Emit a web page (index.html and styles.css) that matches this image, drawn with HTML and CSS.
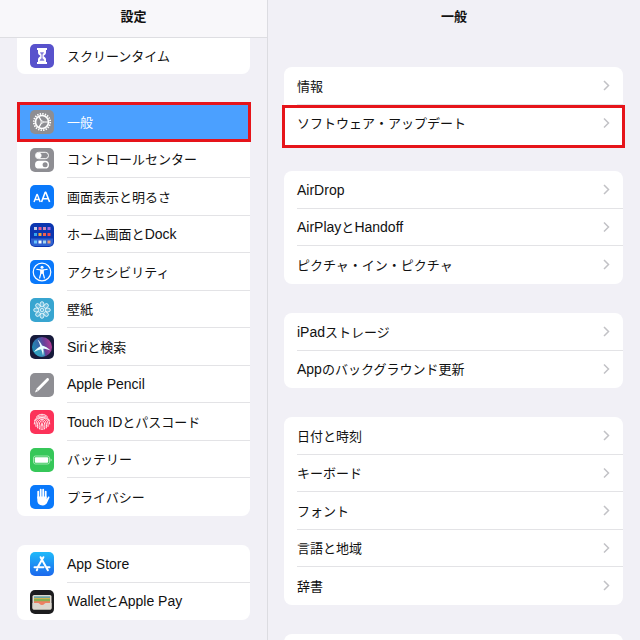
FILE: index.html
```html
<!DOCTYPE html>
<html lang="ja">
<head>
<meta charset="utf-8">
<meta name="viewport" content="width=device-width, initial-scale=1">
<title>設定</title>
<link rel="stylesheet" href="styles.css">
</head>
<body>
<div class="app">
  <nav class="sidebar" aria-labelledby="sidebar-title">
    <header class="bar bar-side"><h1 class="title" id="sidebar-title">設定</h1></header>
    <div class="groups">
      <ul class="card card-cut">
        <li class="row"><a class="link" href="#">
          <svg class="icon" viewBox="0 0 24 24"><rect width="24" height="24" rx="5" fill="#5852cc"/><path d="M7 4h10v2h-1v2.500C16 10.500 14.500 11 13.500 12c1 1 2.500 1.500 2.500 3.500V18h1v2H7v-2h1v-2.500c0-2 1.500-2.500 2.500-3.500C9.500 11 8 10.500 8 8.500V6H7z" fill="#fff"/><path d="M10 8.300h4c-.2 1.300-1.300 1.700-1.500 2.500v3.400c.8.500 1.700 1.100 1.900 2.600H9.600c.2-1.500 1.100-2.100 1.900-2.600v-3.400c-.2-.8-1.300-1.200-1.500-2.500z" fill="#5852cc" opacity=".75"/></svg>
          <span class="label">スクリーンタイム</span></a></li>
      </ul>
      <ul class="card">
        <li class="row row-selected"><a class="link" href="#" aria-current="page">
          <svg class="icon" viewBox="0 0 24 24"><rect width="24" height="24" rx="5" fill="#8e8e93"/><g fill="none" stroke="#fff"><circle cx="12" cy="12" r="8.200" stroke-width="1.800" stroke-dasharray="1.400 1.176"/><circle cx="12" cy="12" r="6.500" stroke-width="1.600"/><path d="M12 12h6M12 12l-3.100-5.400M12 12l-3.100 5.400" stroke-width="1.200"/></g><circle cx="12" cy="12" r="1.500" fill="#fff"/><circle cx="12" cy="12" r=".7" fill="#8e8e93"/></svg>
          <span class="label">一般</span></a><span class="mark mark-side"></span></li>
        <li class="row"><a class="link" href="#">
          <svg class="icon" viewBox="0 0 24 24"><rect width="24" height="24" rx="5" fill="#8e8e93"/><rect x="5.500" y="4.300" width="13" height="6.400" rx="3.200" fill="none" stroke="#fff"/><circle cx="8.700" cy="7.500" r="2.800" fill="#fff"/><rect x="5" y="12.800" width="14" height="7.800" rx="3.900" fill="#fff"/><circle cx="15.100" cy="16.700" r="2.500" fill="#8e8e93"/></svg>
          <span class="label">コントロールセンター</span></a></li>
        <li class="row"><a class="link" href="#">
          <svg class="icon" viewBox="0 0 24 24"><rect width="24" height="24" rx="5" fill="#0a79fb"/><g fill="none" stroke="#fff" stroke-width="1.400" stroke-linejoin="round"><path d="M4 17l2.900-7.500h.4L10.200 17M5 14.500h4.200"/><path d="M11.500 17l3.700-9.700h.6L19.600 17M12.800 13.800h5.500" stroke-width="1.600"/></g></svg>
          <span class="label">画面表示と明るさ</span></a></li>
        <li class="row"><a class="link" href="#">
          <svg class="icon" viewBox="0 0 24 24"><rect width="24" height="24" rx="5" fill="#0b36b0"/><path d="M1 15.500h22V19a4 4 0 0 1-4 4H5a4 4 0 0 1-4-4z" fill="#2f62d0"/><path d="M4 4h3v3H4z" fill="#c7cdea"/><path d="M8.500 4h3v3h-3z" fill="#e85c92"/><path d="M13 4h3v3h-3z" fill="#d08ab0"/><path d="M17.500 4h3v3h-3z" fill="#a568de"/><path d="M4 10h3v3H4z" fill="#35a5ef"/><path d="M8.500 10h3v3h-3z" fill="#f2a43c"/><path d="M13 10h3v3h-3z" fill="#f0604e"/><path d="M17.500 10h3v3h-3z" fill="#ed4b55"/><path d="M4 17.500h3v3H4z" fill="#66c4ff"/><path d="M8.500 17.500h3v3h-3z" fill="#fff"/><path d="M13 17.500h3v3h-3z" fill="#a9d6ed"/><path d="M17.500 17.500h3v3h-3z" fill="#ee9c79"/></svg>
          <span class="label">ホーム画面と<span class="latin">Dock</span></span></a></li>
        <li class="row"><a class="link" href="#">
          <svg class="icon" viewBox="0 0 24 24"><rect width="24" height="24" rx="5" fill="#0a79fb"/><circle cx="12" cy="12" r="8.800" fill="none" stroke="#fff" stroke-width="1.200"/><circle cx="12" cy="7.200" r="1.500" fill="#fff"/><path d="M6.900 9.300c1.700.3 3.200.7 5.100.7s3.400-.4 5.100-.7M10.900 10v3.200L9.600 18M13.100 10v3.200l1.300 4.800" fill="none" stroke="#fff" stroke-width="1.200" stroke-linecap="round"/><path d="M10.400 9.800h3.200v4h-3.200z" fill="#fff"/></svg>
          <span class="label">アクセシビリティ</span></a></li>
        <li class="row"><a class="link" href="#">
          <svg class="icon" viewBox="0 0 24 24"><rect width="24" height="24" rx="5" fill="#38a5d0"/><g fill="#fff" fill-opacity=".25" stroke="#e8f7fc" stroke-width=".9"><circle cx="12" cy="12" r="1.800"/><g id="petals"><ellipse cx="12" cy="6.300" rx="2" ry="2.600"/><ellipse cx="12" cy="17.700" rx="2" ry="2.600"/><ellipse cx="6.300" cy="12" rx="2.600" ry="2"/><ellipse cx="17.700" cy="12" rx="2.600" ry="2"/></g><use href="#petals" transform="rotate(45 12 12)"/></g></svg>
          <span class="label">壁紙</span></a></li>
        <li class="row"><a class="link" href="#">
          <svg class="icon" viewBox="0 0 24 24"><defs><linearGradient id="siri" x1="0" y1=".6" x2="1" y2=".4"><stop offset="0" stop-color="#1c8fb4"/><stop offset=".4" stop-color="#3b62a8"/><stop offset=".65" stop-color="#6a3f98"/><stop offset="1" stop-color="#b83a94"/></linearGradient></defs><rect width="24" height="24" rx="5" fill="#171a3b"/><circle cx="12" cy="12" r="10" fill="url(#siri)"/><path d="M4 16c3-1.500 5-3 8-4 2 3 3 5 3 9-5 2-9 0-11-5z" fill="#36b7c9" opacity=".6"/><path d="M7.500 4.500c2 1.500 3.500 3.500 4.500 6 3 .7 6 2.500 8.500 5-3-1.300-5.200-1.800-7.200-1.800.4 2.300.3 4.600-.3 6.800-.4-2.200-1-4.300-1.900-6.200-2.100.4-4.400 1.200-7.100 2.900 1.700-2.600 3.700-4.500 6.300-5.900-.6-2.500-1.500-4.700-2.800-6.800z" fill="#e9ffff"/></svg>
          <span class="label"><span class="latin">Siri</span>と検索</span></a></li>
        <li class="row"><a class="link" href="#">
          <svg class="icon" viewBox="0 0 24 24"><rect width="24" height="24" rx="5" fill="#8e8e93"/><path d="M5 19.500l1.400-3.700L16.600 5.400c1.300-1.300 3.300.7 2 2L8.300 17.900z" fill="#fff"/><path d="M6.200 15.800l2 2" stroke="#8e8e93" stroke-width=".6"/></svg>
          <span class="label"><span class="latin">Apple Pencil</span></span></a></li>
        <li class="row"><a class="link" href="#">
          <svg class="icon" viewBox="0 0 24 24"><rect width="24" height="24" rx="5" fill="#fc3259"/><g fill="none" stroke="#fff" stroke-width=".9" stroke-linecap="round"><path d="M6.500 6.800C9.500 3.400 14.500 3.400 17.500 6.800M4.600 10.500C7 4.300 17 4.300 19.400 10.500M4.300 14c-.2-9 15.600-9 15.400 0M6 16.500c-2-11.500 14-11.500 12 0M7.700 18c-2.500-11.500 11-11.500 8.600 0M9.500 19c-2.500-11 7.500-11 5 0M11.200 19.600c-1.400-8 3-8 1.600 0M12 12.800v3"/></g></svg>
          <span class="label"><span class="latin">Touch ID</span>とパスコード</span></a></li>
        <li class="row"><a class="link" href="#">
          <svg class="icon" viewBox="0 0 24 24"><rect width="24" height="24" rx="5" fill="#36c759"/><rect x="3.500" y="8" width="16" height="8" rx="2" fill="none" stroke="#b6edc2" stroke-width=".8"/><rect x="4.800" y="9.200" width="13.400" height="5.600" rx="1" fill="#fff"/><path d="M20.600 10.500c1.300.5 1.300 2.500 0 3z" fill="#d9f7df"/></svg>
          <span class="label">バッテリー</span></a></li>
        <li class="row"><a class="link" href="#">
          <svg class="icon" viewBox="0 0 24 24"><rect width="24" height="24" rx="5" fill="#0a79fb"/><g stroke="#fff" stroke-linecap="round" stroke-width="1.800" fill="none"><path d="M8.200 13V6.600M10.700 12V4.600M13.200 12V4.600M15.700 13V6.600"/></g><path d="M7.300 11.500h9.300v2.700l1.300-2.200c.6-.9 1.900-.3 1.500.7l-2.200 4.800c-.8 1.800-2.200 2.900-4.500 2.900-3.600 0-5.400-2-5.400-5.300z" fill="#fff"/></svg>
          <span class="label">プライバシー</span></a></li>
      </ul>
      <ul class="card">
        <li class="row"><a class="link" href="#">
          <svg class="icon" viewBox="0 0 24 24"><defs><linearGradient id="store" x2="0" y2="1"><stop stop-color="#1fbafa"/><stop offset="1" stop-color="#1c68ed"/></linearGradient></defs><rect width="24" height="24" rx="5" fill="url(#store)"/><path d="M10.600 5.200l6.700 12M13.400 5.200L8.100 14.500M4.500 15.300h9M16.500 15.300h3M7.300 17.300l-.5.900M17.300 17.200l.6 1" fill="none" stroke="#fff" stroke-width="2" stroke-linecap="round"/></svg>
          <span class="label"><span class="latin">App Store</span></span></a></li>
        <li class="row"><a class="link" href="#">
          <svg class="icon" viewBox="0 0 24 24"><rect width="24" height="24" rx="5" fill="#1c1c1e"/><rect x="2.500" y="5" width="19" height="14.500" rx="1.500" fill="#ddd8cf"/><path d="M4 6.300h16v3H4z" fill="#6aa5a5"/><path d="M4 8.300h16v4H4z" fill="#86b053"/><path d="M4 8h16v1H4z" fill="#d2b24d"/><path d="M4 11.300h16v2.500l-4 .5c-1 1.200-2 2.200-4 2.200s-3-1-4-2.200l-4-.5z" fill="#ed7f62"/><path d="M2.500 13H8c1.500 0 1.800 2 4 2s2.500-2 4-2h5.500v5a1.500 1.500 0 0 1-1.500 1.500H4A1.500 1.500 0 0 1 2.500 18z" fill="#dcd7ce"/></svg>
          <span class="label"><span class="latin">Wallet</span>と<span class="latin">Apple Pay</span></span></a></li>
      </ul>
    </div>
  </nav>
  <main class="detail">
    <header class="bar"><h2 class="title">一般</h2></header>
    <div class="groups">
      <ul class="card">
        <li class="row"><a class="link" href="#"><span class="label">情報</span><svg class="chevron" viewBox="0 0 7 11"><path d="M1 1l4.500 4.500L1 10"/></svg></a></li>
        <li class="row"><a class="link" href="#"><span class="label">ソフトウェア・アップデート</span><svg class="chevron" viewBox="0 0 7 11"><path d="M1 1l4.500 4.500L1 10"/></svg></a><span class="mark mark-detail"></span></li>
      </ul>
      <ul class="card">
        <li class="row"><a class="link" href="#"><span class="label"><span class="latin">AirDrop</span></span><svg class="chevron" viewBox="0 0 7 11"><path d="M1 1l4.500 4.500L1 10"/></svg></a></li>
        <li class="row"><a class="link" href="#"><span class="label"><span class="latin">AirPlay</span>と<span class="latin">Handoff</span></span><svg class="chevron" viewBox="0 0 7 11"><path d="M1 1l4.500 4.500L1 10"/></svg></a></li>
        <li class="row"><a class="link" href="#"><span class="label">ピクチャ・イン・ピクチャ</span><svg class="chevron" viewBox="0 0 7 11"><path d="M1 1l4.500 4.500L1 10"/></svg></a></li>
      </ul>
      <ul class="card">
        <li class="row"><a class="link" href="#"><span class="label"><span class="latin">iPad</span>ストレージ</span><svg class="chevron" viewBox="0 0 7 11"><path d="M1 1l4.500 4.500L1 10"/></svg></a></li>
        <li class="row"><a class="link" href="#"><span class="label"><span class="latin">App</span>のバックグラウンド更新</span><svg class="chevron" viewBox="0 0 7 11"><path d="M1 1l4.500 4.500L1 10"/></svg></a></li>
      </ul>
      <ul class="card">
        <li class="row"><a class="link" href="#"><span class="label">日付と時刻</span><svg class="chevron" viewBox="0 0 7 11"><path d="M1 1l4.500 4.500L1 10"/></svg></a></li>
        <li class="row"><a class="link" href="#"><span class="label">キーボード</span><svg class="chevron" viewBox="0 0 7 11"><path d="M1 1l4.500 4.500L1 10"/></svg></a></li>
        <li class="row"><a class="link" href="#"><span class="label">フォント</span><svg class="chevron" viewBox="0 0 7 11"><path d="M1 1l4.500 4.500L1 10"/></svg></a></li>
        <li class="row"><a class="link" href="#"><span class="label">言語と地域</span><svg class="chevron" viewBox="0 0 7 11"><path d="M1 1l4.500 4.500L1 10"/></svg></a></li>
        <li class="row"><a class="link" href="#"><span class="label">辞書</span><svg class="chevron" viewBox="0 0 7 11"><path d="M1 1l4.500 4.500L1 10"/></svg></a></li>
      </ul>
      <ul class="card"><li class="row"></li></ul>
    </div>
  </main>
</div>
</body>
</html>
```
FILE: styles.css
```css
* { box-sizing: border-box; }

body {
  margin: 0;
  background: #f1f0f6;
  color: #111;
  font: 13px/20px "Noto Sans CJK JP", sans-serif;
}

.app {
  display: grid;
  grid-template-columns: 268px 1fr;
  height: 100vh;
  overflow: hidden;
}

.sidebar { border-right: 1px solid #dcdce1; }

.bar {
  display: flex;
  justify-content: center;
  padding: 6px 0 11px;
}

.bar-side {
  background: #f8f7fa;
  border-bottom: 1px solid #dedee2;
}

.title {
  margin: 0;
  font-size: 13px;
  line-height: 20px;
  font-weight: 700;
}

.groups {
  display: flex;
  flex-direction: column;
  gap: 29px;
  padding: 0 17px;
}

.detail .groups { padding: 30px 17px 0 16px; }

.card {
  margin: 0;
  padding: 0;
  list-style: none;
  background: #fff;
  border-radius: 8px;
}

.row {
  position: relative;
  isolation: isolate;
  display: flex;
  min-height: 38px;
}

.row:nth-child(even) { min-height: 37px; }

.card-cut { border-radius: 0 0 8px 8px; }
.card-cut .row { min-height: 36px; }

.link {
  flex: 1;
  display: flex;
  align-items: center;
  color: inherit;
  text-decoration: none;
  padding-left: 13px;
}

.icon {
  width: 24px;
  height: 24px;
  margin-right: 13px;
}

.label {
  flex: 1;
  align-self: stretch;
  display: flex;
  align-items: center;
  border-bottom: 1px solid #e3e3e6;
}

.row:last-child .label,
.row-selected .label { border-bottom-color: transparent; }

.latin { font: 14px/20px "Liberation Sans", sans-serif; }

.row-selected {
  background: #4ba0ff;
  color: #fff;
}

.chevron {
  align-self: stretch;
  width: 20px;
  height: auto;
  padding: 0 13px 0 0;
  border-bottom: 1px solid #e3e3e6;
  fill: none;
  stroke: #c2c2c6;
  stroke-width: 1.5;
}

.row:last-child .chevron { border-bottom-color: transparent; }

.mark {
  position: absolute;
  border: 3px solid #e6141a;
  pointer-events: none;
}

.mark-side { inset: -1px -1px -1px 0; }

.mark-detail {
  inset: 0 -2px -6px;
  z-index: -1;
  background: #fff;
}
```
